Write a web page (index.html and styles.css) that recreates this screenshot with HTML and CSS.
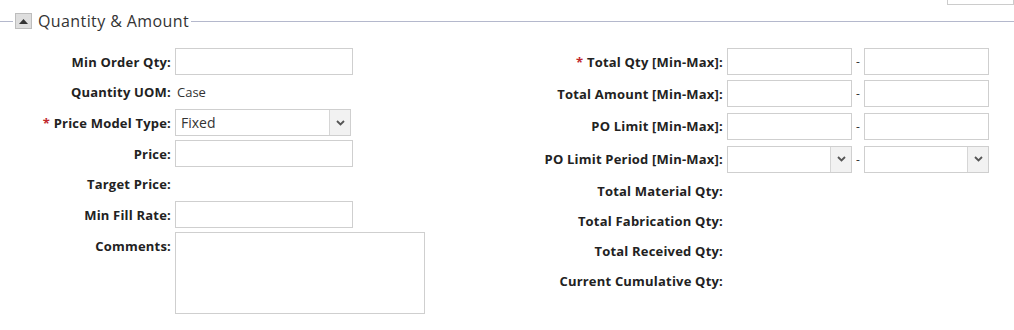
FILE: index.html
```html
<!DOCTYPE html>
<html lang="en">
<head>
    <meta charset="UTF-8">
    <title>Quantity &amp; Amount</title>
    <link rel="stylesheet" href="styles.css">
</head>
<body>
    <div class="top-strip">
        <div class="top-box"></div>
    </div>

    <div class="section-head">
        <span class="rule rule-short"></span>
        <button class="toggle" type="button" aria-label="Collapse">
            <svg width="9" height="5" viewBox="0 0 9 5"><path d="M0 5 L4.5 0 L9 5 Z" fill="#333"/></svg>
        </button>
        <span class="section-title">Quantity &amp; Amount</span>
        <span class="rule rule-long"></span>
    </div>

    <div class="form-body">
        <div class="col col-left">
            <label class="lbl">Min Order Qty:</label>
            <input class="txt" type="text">

            <label class="lbl lbl-text">Quantity UOM:</label>
            <span class="val">Case</span>

            <label class="lbl"><span class="req">*</span> Price Model Type:</label>
            <div class="sel sel-wide">
                <span class="sel-value">Fixed</span>
                <span class="sel-btn">
                    <svg width="9" height="6" viewBox="0 0 9 6"><path d="M1 1 L4.5 4.5 L8 1" fill="none" stroke="#555" stroke-width="1.8"/></svg>
                </span>
            </div>

            <label class="lbl">Price:</label>
            <input class="txt" type="text">

            <label class="lbl lbl-text">Target Price:</label>
            <span class="val"></span>

            <label class="lbl">Min Fill Rate:</label>
            <input class="txt" type="text">

            <label class="lbl lbl-top">Comments:</label>
            <textarea class="comments"></textarea>
        </div>

        <div class="col col-right">
            <label class="lbl"><span class="req">*</span> Total Qty [Min-Max]:</label>
            <div class="range">
                <input class="txt txt-min" type="text">
                <span class="dash">-</span>
                <input class="txt txt-max" type="text">
            </div>

            <label class="lbl">Total Amount [Min-Max]:</label>
            <div class="range">
                <input class="txt txt-min" type="text">
                <span class="dash">-</span>
                <input class="txt txt-max" type="text">
            </div>

            <label class="lbl">PO Limit [Min-Max]:</label>
            <div class="range">
                <input class="txt txt-min" type="text">
                <span class="dash">-</span>
                <input class="txt txt-max" type="text">
            </div>

            <label class="lbl">PO Limit Period [Min-Max]:</label>
            <div class="range">
                <div class="sel txt-min">
                    <span class="sel-value"></span>
                    <span class="sel-btn">
                        <svg width="9" height="6" viewBox="0 0 9 6"><path d="M1 1 L4.5 4.5 L8 1" fill="none" stroke="#555" stroke-width="1.8"/></svg>
                    </span>
                </div>
                <span class="dash">-</span>
                <div class="sel txt-max">
                    <span class="sel-value"></span>
                    <span class="sel-btn">
                        <svg width="9" height="6" viewBox="0 0 9 6"><path d="M1 1 L4.5 4.5 L8 1" fill="none" stroke="#555" stroke-width="1.8"/></svg>
                    </span>
                </div>
            </div>

            <label class="lbl lbl-text">Total Material Qty:</label>
            <span class="val"></span>

            <label class="lbl lbl-text">Total Fabrication Qty:</label>
            <span class="val"></span>

            <label class="lbl lbl-text">Total Received Qty:</label>
            <span class="val"></span>

            <label class="lbl lbl-text">Current Cumulative Qty:</label>
            <span class="val"></span>
        </div>
    </div>
</body>
</html>
```

FILE: styles.css
```css
body {
    margin: 0;
    background: #fff;
    font-family: "Open Sans", "Liberation Sans", sans-serif;
    font-size: 12px;
    color: #222;
}
.top-strip {
    display: flex;
    justify-content: flex-end;
    height: 5px;
}
.top-box {
    width: 65px;
    height: 4px;
    border: 1px solid #ccc;
    border-top: none;
}
.section-head {
    display: flex;
    align-items: center;
    height: 20px;
    margin-top: 6px;
}
.rule {
    height: 1px;
    background: #b4b8cc;
}
.rule-short {
    width: 13px;
}
.rule-long {
    flex: 1;
    margin-left: 2px;
}
.toggle {
    width: 17px;
    height: 16px;
    margin: 0 6px 0 2px;
    padding: 0;
    border: 1px solid #bdbdbd;
    background: #dedede;
    display: flex;
    align-items: center;
    justify-content: center;
}
.section-title {
    font-size: 16px;
    letter-spacing: 0.4px;
    color: #333;
}
.form-body {
    display: flex;
    margin-top: 17px;
}
.col {
    display: grid;
    column-gap: 4px;
    align-items: center;
}
.col-left {
    width: 530px;
    grid-template-columns: 171px 1fr;
    grid-template-rows: 27px 26px 27px 27px 26px 27px auto;
    row-gap: 4px;
}
.col-right {
    grid-template-columns: 193px 1fr;
    grid-template-rows: 27px 27px 28px 28px 25px 25px 25px 25px;
    row-gap: 5px;
}
.lbl {
    text-align: right;
    font-size: 13px;
    letter-spacing: 0.2px;
    font-weight: bold;
    white-space: nowrap;
}
.lbl-top {
    align-self: start;
    padding-top: 5px;
}
.req {
    color: #c0282d;
}
.val {
    font-size: 13px;
    color: #333;
    padding-left: 2px;
}
.txt {
    box-sizing: border-box;
    width: 178px;
    height: 27px;
    margin: 0;
    border: 1px solid #cfcfcf;
    background: #fff;
    font: inherit;
}
.sel {
    box-sizing: border-box;
    display: flex;
    height: 27px;
    border: 1px solid #cfcfcf;
    background: #fff;
}
.sel-wide {
    width: 176px;
}
.sel-value {
    flex: 1;
    padding-left: 5px;
    font-size: 14px;
    line-height: 25px;
    color: #333;
}
.sel-btn {
    width: 20px;
    border-left: 1px solid #d6d6d6;
    background: #f2f2f2;
    display: flex;
    align-items: center;
    justify-content: center;
}
.comments {
    box-sizing: border-box;
    width: 250px;
    height: 82px;
    margin: 0;
    border: 1px solid #cfcfcf;
    resize: none;
    font: inherit;
}
.range {
    display: flex;
    align-items: center;
}
.txt-min {
    width: 125px;
}
.txt-max {
    width: 125px;
}
.dash {
    width: 12px;
    text-align: center;
    color: #333;
}
```
